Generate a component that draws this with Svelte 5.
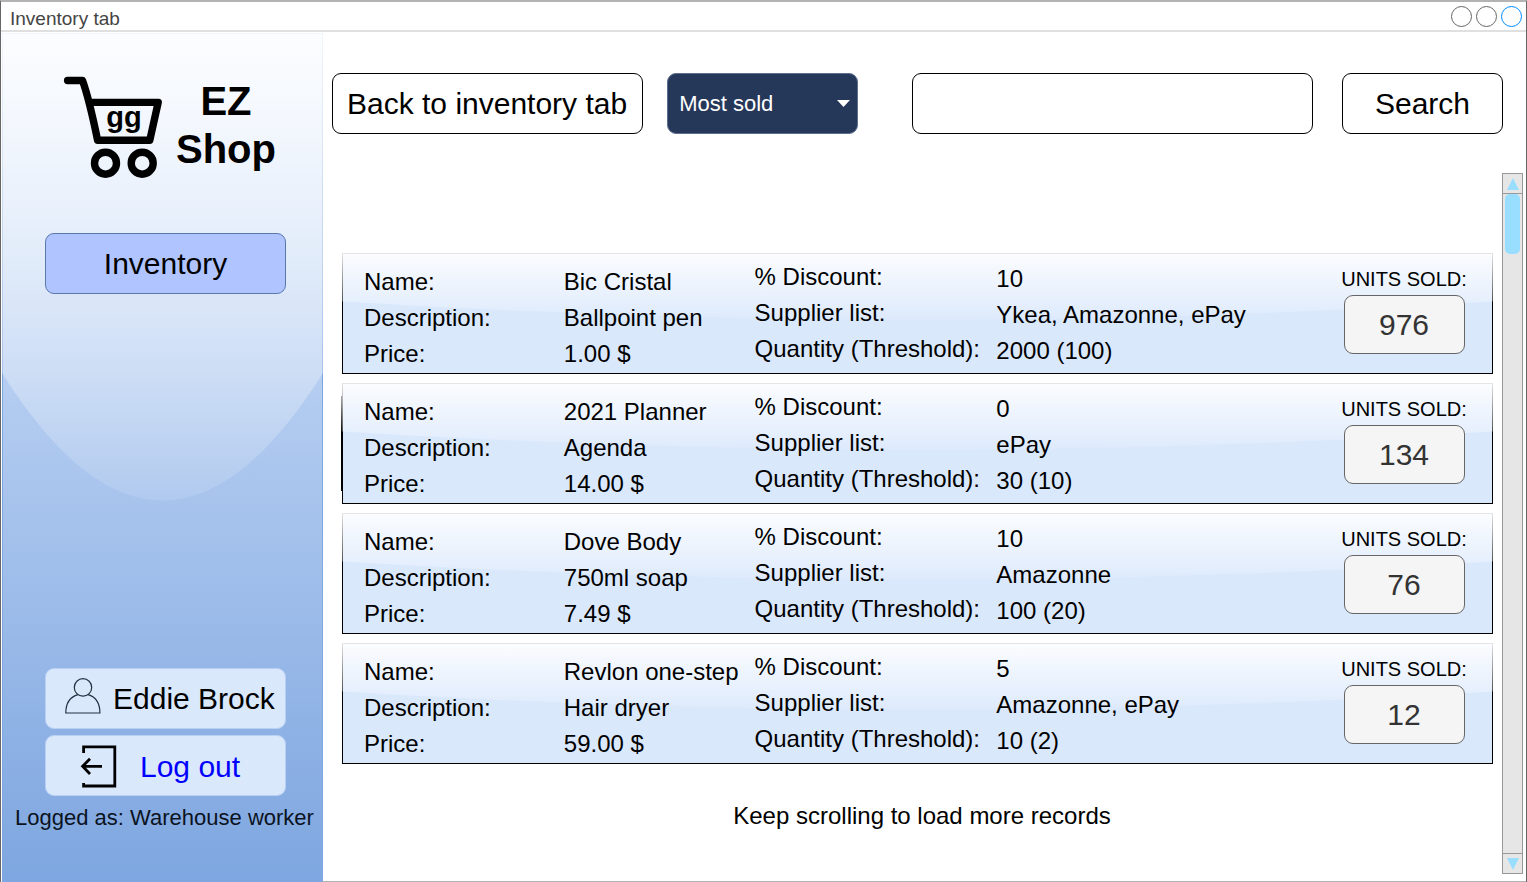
<script>
  const records = [
    { name: 'Bic Cristal', description: 'Ballpoint pen', price: '1.00 $', discount: '10', suppliers: 'Ykea, Amazonne, ePay', quantity: '2000 (100)', sold: 976 },
    { name: '2021 Planner', description: 'Agenda', price: '14.00 $', discount: '0', suppliers: 'ePay', quantity: '30 (10)', sold: 134, stacked: true },
    { name: 'Dove Body', description: '750ml soap', price: '7.49 $', discount: '10', suppliers: 'Amazonne', quantity: '100 (20)', sold: 76 },
    { name: 'Revlon one-step', description: 'Hair dryer', price: '59.00 $', discount: '5', suppliers: 'Amazonne, ePay', quantity: '10 (2)', sold: 12 }
  ];
  let order = $state('Most sold');
  let query = $state('');
</script>

{#snippet glass(id)}
  <svg class="glass" viewBox="0 0 100 100" preserveAspectRatio="none" aria-hidden="true">
    <defs>
      <linearGradient {id} x1="0" y1="0" x2="0" y2="1">
        <stop offset="0" stop-color="#fff" stop-opacity="0.9" />
        <stop offset="1" stop-color="#fff" stop-opacity="0.1" />
      </linearGradient>
    </defs>
    <path d="M0 0V40Q50 70 100 40V0Z" fill="url(#{id})" />
  </svg>
{/snippet}

<div class="window">
  <header class="titlebar">
    <span>Inventory tab</span>
    <div class="dots"><i></i><i></i><i class="active"></i></div>
  </header>

  <div class="body">
    <aside class="sidebar">
      {@render glass('glass-side')}
      <div class="brand">
        <svg width="100" height="104" viewBox="63 75 100 104" aria-hidden="true">
          <g fill="none" stroke="#000" stroke-width="7.4" stroke-linejoin="round" stroke-linecap="round">
            <path d="M67.6 80.5H82.5C87 93 92 113 97.6 140.2H149.8L158.2 102.4H89" />
            <circle cx="105.5" cy="163.2" r="11" />
            <circle cx="142.2" cy="163.2" r="11" />
          </g>
          <text x="124" y="127" text-anchor="middle">gg</text>
        </svg>
        <h1>EZ<br />Shop</h1>
      </div>
      <button class="nav">Inventory</button>

      <div class="account">
        <button class="soft user">
          <svg width="36" height="38" viewBox="65 677 36 38" fill="none" stroke="#23303f" stroke-width="1.2" aria-hidden="true">
            <circle cx="83" cy="687.4" r="8.7" />
            <path d="M78 694.7C70 697 65.8 703 65.8 713H99.9C99.9 703 96 697 88 694.7" />
          </svg>
          Eddie Brock
        </button>
        <a class="soft logout" href="#logout">
          <svg width="38" height="44" viewBox="80 744 38 44" fill="none" stroke="#000" aria-hidden="true">
            <path stroke-width="2.8" d="M83.6 753V746.8H114.8V786H83.6V783" />
            <path stroke-width="2.8" d="M102 766.3H83M90 758.8L82.6 766.3L90 774" />
          </svg>
          Log out
        </a>
        <p>Logged as: Warehouse worker</p>
      </div>
    </aside>

    <main>
      <form class="tools" onsubmit={(e) => e.preventDefault()}>
        <button type="button" class="plain back">Back to inventory tab</button>
        <div class="picker">
          <select aria-label="Order" bind:value={order}>
            <option>Most sold</option>
            <option>Least sold</option>
          </select>
          <svg width="13" height="7" viewBox="0 0 13 7" aria-hidden="true"><path d="M0 0H13L6.5 7Z" fill="#fff" /></svg>
        </div>
        <input type="search" aria-label="Search inventory" bind:value={query} />
        <button class="plain search">Search</button>
      </form>

      <div class="results">
        <section class="records">
          {#each records as r, n}
            <article class:stacked={r.stacked}>
              {@render glass('glass-' + n)}
              <dl class="facts">
                <div class="first">
                  <dt>Name:</dt><dt>Description:</dt><dt>Price:</dt>
                </div>
                <div class="first">
                  <dd>{r.name}</dd><dd>{r.description}</dd><dd>{r.price}</dd>
                </div>
                <div class="second">
                  <dt>% Discount:</dt><dt>Supplier list:</dt><dt>Quantity (Threshold):</dt>
                </div>
                <div class="third">
                  <dd>{r.discount}</dd><dd>{r.suppliers}</dd><dd>{r.quantity}</dd>
                </div>
              </dl>
              <div class="sold">
                <span>UNITS SOLD:</span>
                <output>{r.sold}</output>
              </div>
            </article>
          {/each}
          <p class="more">Keep scrolling to load more records</p>
        </section>

        <div class="track">
          <button aria-label="Scroll up">
            <svg width="12" height="12" viewBox="0 0 12 12"><path d="M6 0L12 12H0Z" fill="#9df" /></svg>
          </button>
          <div class="thumb"></div>
          <button class="down" aria-label="Scroll down">
            <svg width="12" height="12" viewBox="0 0 12 12"><path d="M6 12L12 0H0Z" fill="#9df" /></svg>
          </button>
        </div>
      </div>
    </main>
  </div>
</div>

<style>
  :global(body) {
    font-family: "Liberation Sans", Arial, sans-serif;
    color: #000;
    background: #fff;
  }
  * { box-sizing: border-box; }
  h1, p, dl, dd { margin: 0; }
  button, input, select { font: inherit; color: inherit; }
  button { padding: 0; cursor: pointer; }

  .window {
    min-height: 100vh;
    display: flex;
    flex-direction: column;
    border: 1px solid #666;
    border-top: 2px solid #b3b3b3;
    border-bottom: 0;
  }
  .titlebar {
    height: 30px;
    flex: none;
    display: flex;
    align-items: center;
    justify-content: space-between;
    padding: 0 4px 0 9px;
    border-bottom: 2px solid #e0e0e0;
    font-size: 19px;
    color: #444;
  }
  .titlebar span { padding-top: 5px; }
  .dots { display: flex; gap: 4px; }
  .dots i {
    width: 21px;
    height: 21px;
    border: 1px solid #666;
    border-radius: 50%;
  }
  .dots .active { border-color: #008cff; }

  .body { flex: 1; display: flex; padding-left: 1px; }
  .glass {
    position: absolute;
    top: -1px;
    left: -1px;
    width: calc(100% + 2px);
    height: calc(100% + 2px);
    pointer-events: none;
  }

  .sidebar {
    position: relative;
    flex: none;
    width: 321px;
    margin-top: 1px;
    padding: 41px 36px 50px 42px;
    display: flex;
    flex-direction: column;
    border: 1px solid #7ea6e0;
    border-bottom: 0;
    background: linear-gradient(#dae8fc, #7ea6e0);
  }
  .sidebar > div, .sidebar > button { position: relative; }
  .brand {
    display: flex;
    align-items: flex-start;
    gap: 13px;
    padding-left: 18px;
  }
  .brand svg { flex: none; }
  .brand text { font-size: 29px; font-weight: 700; }
  .brand h1 {
    font-size: 40px;
    line-height: 48px;
    text-align: center;
    padding-top: 2px;
  }
  .nav, .soft {
    height: 61px;
    border-radius: 9px;
    font-size: 30px;
  }
  .nav {
    margin-top: 54px;
    border: 1px solid #5b78ab;
    background: #b0c4ff;
  }
  .account {
    margin-top: auto;
    display: flex;
    flex-direction: column;
    gap: 6px;
  }
  .soft {
    display: flex;
    align-items: center;
    border: 1px solid #b9d0f4;
    background: #dae8fc;
    text-decoration: none;
    white-space: nowrap;
  }
  .user { gap: 12px; padding: 0 0 0 19px; }
  .user svg { margin-bottom: 6px; }
  .logout { gap: 22px; padding: 2px 0 0 34px; color: #00f; }
  .logout svg { margin-bottom: 2px; }
  .account p {
    margin: 2px -35px 0 -37px;
    font-size: 22px;
    line-height: 28px;
    text-align: center;
    white-space: nowrap;
    color: #0b131f;
  }

  main {
    flex: 1;
    min-width: 0;
    display: flex;
    flex-direction: column;
    border-bottom: 1px solid #b3b3b3;
  }
  .tools {
    display: flex;
    padding: 41px 23px 0 9px;
  }
  .tools > * { height: 61px; }
  .plain, input {
    border: 1px solid #000;
    border-radius: 9px;
    background: #fff;
    font-size: 30px;
    white-space: nowrap;
  }
  .back { padding: 0 15px 0 14px; }
  .search { width: 161px; }
  input {
    flex: 1;
    min-width: 0;
    margin: 0 29px 0 54px;
    padding: 0 12px;
    appearance: none;
    outline: 0;
  }
  .picker {
    position: relative;
    width: 191px;
    margin-left: 24px;
  }
  select {
    width: 100%;
    height: 100%;
    padding: 0 30px 0 11px;
    appearance: none;
    border: 1px solid #5d6e8f;
    border-radius: 9px;
    background: #263859;
    color: #fff;
    font-size: 22px;
  }
  .picker svg {
    position: absolute;
    right: 8px;
    top: 27px;
    pointer-events: none;
  }

  .results {
    flex: 1;
    display: flex;
    gap: 9px;
    padding: 39px 3px 7px 19px;
  }
  .records {
    flex: 1;
    min-width: 0;
    padding-top: 80px;
    display: flex;
    flex-direction: column;
    gap: 9px;
  }
  article {
    position: relative;
    display: flex;
    height: 121px;
    border: 1px solid #000;
    background: #dae8fc;
  }
  .stacked::before {
    content: "";
    position: absolute;
    left: -2px;
    top: 12px;
    bottom: 12px;
    width: 1px;
    background: linear-gradient(#aaa, #000 40%);
  }
  .facts {
    position: relative;
    flex: 1;
    display: grid;
    grid-template-columns: 200fr 191fr 242fr 345fr;
    padding-left: 21px;
    font-size: 24px;
    line-height: 36px;
    white-space: nowrap;
  }
  .first { padding-top: 10px; }
  .second { padding-top: 5px; }
  .third { padding-top: 7px; }
  .sold {
    position: relative;
    width: 126px;
    margin-right: 25px;
    padding-top: 13px;
    display: flex;
    flex-direction: column;
    align-items: center;
    gap: 4px;
    font-size: 20px;
    line-height: 24px;
    white-space: nowrap;
  }
  output {
    width: 121px;
    height: 59px;
    border: 1px solid #666;
    border-radius: 9px;
    background: #f5f5f5;
    color: #333;
    font-size: 30px;
    line-height: 57px;
    text-align: center;
  }
  .more {
    padding: 28px 0 0 9px;
    font-size: 24px;
    line-height: 30px;
    text-align: center;
  }

  .track {
    width: 21px;
    display: flex;
    flex-direction: column;
    align-items: center;
    border: 1px solid #999;
    background: #e6e6e6;
  }
  .track button {
    width: 100%;
    height: 20px;
    display: grid;
    place-items: center;
    border: 0;
    border-bottom: 1px solid #999;
    background: none;
  }
  .track .down {
    margin-top: auto;
    border-top: 1px solid #999;
    border-bottom: 0;
  }
  .thumb {
    width: 15px;
    height: 60px;
    border-radius: 5px;
    background: #9df;
  }
</style>
